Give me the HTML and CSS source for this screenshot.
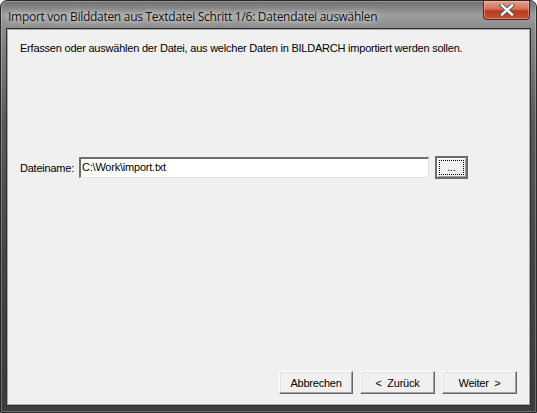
FILE: index.html
```html
<!DOCTYPE html>
<html>
<head>
<meta charset="utf-8">
<link rel="stylesheet" href="styles.css">
</head>
<body>
<div class="window">
  <div class="titlebar">
    <span class="title">Import von Bilddaten aus Textdatei Schritt 1/6: Datendatei auswählen</span>
    <div class="close">
      <svg width="18" height="12" viewBox="0 0 18 12">
        <path d="M4 1.5 L14 10.5 M14 1.5 L4 10.5" stroke="#555" stroke-width="4.2" stroke-linecap="square"/>
        <path d="M4 1.5 L14 10.5 M14 1.5 L4 10.5" stroke="#fff" stroke-width="2.4" stroke-linecap="square"/>
      </svg>
    </div>
  </div>
  <div class="client">
    <p class="intro">Erfassen oder auswählen der Datei, aus welcher Daten in BILDARCH importiert werden sollen.</p>
    <div class="file-row">
      <label class="label">Dateiname:</label>
      <div class="input">C:\Work\import.txt</div>
      <div class="btn btn-browse"><span class="focus">...</span></div>
    </div>
    <div class="actions">
      <div class="btn btn-action">Abbrechen</div>
      <div class="btn btn-action">&lt;&nbsp; Zurück</div>
      <div class="btn btn-action">Weiter &nbsp;&gt;</div>
    </div>
  </div>
</div>
</body>
</html>
```
FILE: styles.css
```css
html, body {
  margin: 0;
  padding: 0;
  background: #fff;
}
.window {
  width: 537px;
  height: 413px;
  box-sizing: border-box;
  display: flex;
  flex-direction: column;
  border: 1px solid #2a2a2a;
  border-radius: 7px 7px 0 0;
  background: linear-gradient(to bottom, #6e6e6e 0px, #9c9c9c 14px, #8a8a8a 28px, #5a5a5a 120px, #444 260px, #3c3c3c 100%);
  box-shadow: inset 0 0 0 1px rgba(255,255,255,0.25);
}
.titlebar {
  height: 28px;
  display: flex;
  align-items: flex-start;
  padding-left: 7px;
  flex: none;
}
.title {
  margin-top: 7px;
  font-family: "Open Sans", "Noto Sans", sans-serif;
  font-size: 12px;
  letter-spacing: -0.28px;
  color: #111;
  text-shadow: 0 0 8px rgba(255,255,255,0.9), 0 0 4px rgba(255,255,255,0.7);
}
.close {
  margin-left: auto;
  margin-right: 6px;
  width: 47px;
  height: 19px;
  box-sizing: border-box;
  border: 1px solid #5a2316;
  border-top: none;
  border-radius: 0 0 4px 4px;
  background: linear-gradient(to bottom, #e8a08a 0%, #d3705a 45%, #b93b1f 55%, #c95033 100%);
  display: flex;
  align-items: center;
  justify-content: center;
  box-shadow: inset 0 0 0 1px rgba(255,210,200,0.4);
}
.close svg { display: block; }
.client {
  flex: 1;
  margin: 0 6px 7px 6px;
  background: #f0f0f0;
  border: 1px solid #a9a9a9;
  box-shadow: 0 0 0 1px #2e2e2e;
  display: flex;
  flex-direction: column;
  font-family: "Liberation Sans", Arial, sans-serif;
  font-size: 11px;
  letter-spacing: -0.22px;
  color: #000;
}
.intro {
  margin: 12px 0 0 12px;
  line-height: 13px;
}
.file-row {
  display: flex;
  align-items: center;
  margin-top: 101px;
  padding-left: 12px;
}
.label {
  width: 59px;
}
.input {
  width: 350px;
  height: 21px;
  box-sizing: border-box;
  background: #fff;
  border-top: 2px solid #6d6d6d;
  border-left: 2px solid #6d6d6d;
  border-right: 1px solid #e3e3e3;
  border-bottom: 1px solid #e3e3e3;
  padding: 1px 0 0 1px;
  line-height: 15px;
}
.btn {
  box-sizing: border-box;
  background: #f0f0f0;
  display: flex;
  align-items: center;
  justify-content: center;
}
.btn-browse {
  margin-left: 6px;
  width: 33px;
  height: 23px;
  border: 2px solid #6a6a6a;
  box-shadow: inset 1px 1px 0 #fff, inset -1px -1px 0 #a0a0a0;
}
.focus {
  width: 25px;
  height: 15px;
  box-sizing: border-box;
  border: 1px dotted #000;
  display: flex;
  align-items: flex-end;
  justify-content: center;
  line-height: 11px;
  padding-bottom: 1px;
}
.actions {
  margin-top: auto;
  margin-bottom: 10px;
  margin-right: 12px;
  display: flex;
  justify-content: flex-end;
  gap: 7px;
}
.btn-action {
  width: 75px;
  height: 23px;
  border-top: 1px solid #fff;
  border-left: 1px solid #fff;
  border-right: 1px solid #696969;
  border-bottom: 1px solid #696969;
  box-shadow: inset -1px -1px 0 #a0a0a0, inset 1px 1px 0 #e3e3e3;
  padding-top: 1px;
}
.btn-action:first-child {
  width: 74px;
}
```
